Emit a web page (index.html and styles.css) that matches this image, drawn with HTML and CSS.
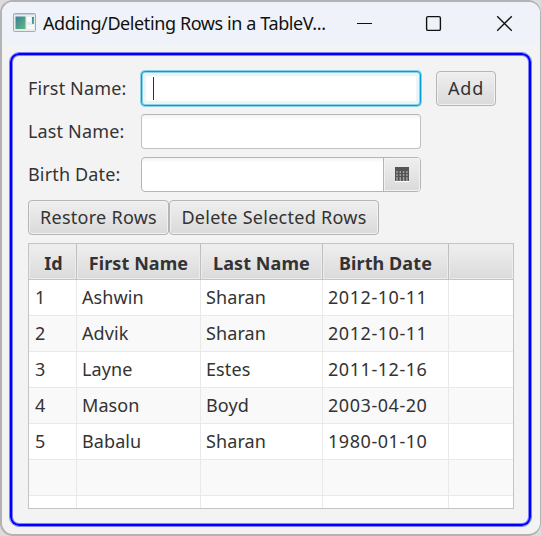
FILE: index.html
```html
<!DOCTYPE html>
<html lang="en">
<head>
<meta charset="utf-8">
<title>Adding/Deleting Rows in a TableView</title>
<link rel="stylesheet" href="styles.css">
</head>
<body>
<div class="window">
  <header class="titlebar">
    <svg class="app-icon" width="23" height="19" viewBox="0 0 23 19">
      <defs><linearGradient id="g" x1="0" y1="0" x2="1" y2="1"><stop offset="0" stop-color="#397fa0"/><stop offset="1" stop-color="#64b878"/></linearGradient></defs>
      <rect x=".5" y=".5" width="22" height="18" rx="1" fill="#e9ecee" stroke="#a5aab4"/>
      <path d="M1 1.5h21" stroke="#c9cdd5"/>
      <rect x="2.5" y="3.5" width="10" height="12.5" fill="url(#g)"/>
      <rect x="14" y="4" width="4" height="5" fill="#fafafa"/>
      <rect x="14" y="12" width="7" height="4" fill="#f8f8f8"/>
      <rect x="19" y="4" width="2" height="7" fill="url(#g)"/>
    </svg>
    <h1 class="title">Adding/Deleting Rows in a TableV...</h1>
    <svg class="controls" width="160" height="20" viewBox="0 0 160 20" fill="none" stroke="#111">
      <path d="M1 10.5h15"/>
      <rect x="70.6" y="3.6" width="13.8" height="13.8" rx="1.5" stroke-width="1.4"/>
      <path d="M141.2 3.2l14.6 14.6M155.8 3.2l-14.6 14.6" stroke-width="1.3"/>
    </svg>
  </header>
  <main class="panel">
    <form class="form">
      <label>First Name:</label><div class="field focused"><i class="caret"></i></div><button type="button" class="button add">Add</button>
      <label>Last Name:</label><div class="field"></div><span></span>
      <label>Birth Date:</label>
      <div class="field date"><span class="picker">
        <svg width="14" height="15" viewBox="0 0 14 15">
          <path d="M0 0h14v14H0z" fill="#555"/>
          <path d="M0 14h14v1H0z" fill="#fff"/>
          <path d="M1.3 5h11.8M1.3 8h11.8M1.3 11h11.8M1.3 13h11.8" stroke="#eee" stroke-width="1.2" stroke-dasharray="1.4 1.9"/>
        </svg>
      </span></div>
    </form>
    <div class="actions"><button type="button" class="button restore">Restore Rows</button><button type="button" class="button delete">Delete Selected Rows</button></div>
    <div class="table">
      <div class="row head"><b>Id</b><b>First Name</b><b>Last Name</b><b>Birth Date</b><b></b></div>
      <div class="row"><span>1</span><span>Ashwin</span><span>Sharan</span><span>2012-10-11</span><span></span></div>
      <div class="row"><span>2</span><span>Advik</span><span>Sharan</span><span>2012-10-11</span><span></span></div>
      <div class="row"><span>3</span><span>Layne</span><span>Estes</span><span>2011-12-16</span><span></span></div>
      <div class="row"><span>4</span><span>Mason</span><span>Boyd</span><span>2003-04-20</span><span></span></div>
      <div class="row"><span>5</span><span>Babalu</span><span>Sharan</span><span>1980-01-10</span><span></span></div>
      <div class="row"><span></span><span></span><span></span><span></span><span></span></div>
      <div class="row"><span></span><span></span><span></span><span></span><span></span></div>
    </div>
  </main>
</div>
</body>
</html>
```
FILE: styles.css
```css
* { box-sizing: border-box; }
body {
  margin: 0;
  background: #dcdcdc;
  font: 18px/24px "Noto Sans", sans-serif;
  color: #333;
  overflow: hidden;
}
.window {
  width: 541px;
  height: 536px;
  border: 2px solid #b3b3b3;
  border-right-width: 1px;
  border-radius: 13px;
  background: #f3f3f3;
  overflow: hidden;
}
.titlebar {
  height: 43px;
  display: flex;
  align-items: center;
  padding-left: 11px;
  background: #eff3f9;
  color: #111;
}
.app-icon { margin-top: -3px; }
.title {
  margin: -1px 0 0 7px;
  width: 313px;
  font-size: 18px;
  font-weight: 400;
  letter-spacing: -0.4px;
  white-space: nowrap;
}
.controls { margin-top: -1px; }
.panel {
  width: 523px;
  height: 475px;
  margin: 7px 0 0 7px;
  padding: 18px 0 0 18px;
  border: 1px solid #8080f9;
  border-radius: 10px;
  box-shadow: inset 0 0 0 2px #00f, inset 0 0 0 3px #8080f9;
}
.form {
  display: grid;
  grid-template-columns: 113px 280px 60px;
  grid-template-rows: repeat(3, 35px);
  row-gap: 8px;
}
.form label { line-height: 34px; letter-spacing: 0.15px; white-space: nowrap; }
.field {
  border: 1px solid #c0c0c0;
  border-top-color: #b5b5b5;
  border-radius: 4px;
  background: linear-gradient(#f3f3f3, #fff 5px);
}
.focused {
  border-color: #039ed3;
  background: #fff;
  box-shadow: 0 0 0 1px #8bd2e8, inset 0 0 0 1px #8bd2e8, inset 0 0 0 4px #e8f6fa;
  padding: 5px 0 0 11px;
}
.caret { display: block; width: 1px; height: 23px; background: #333; }
.date { display: flex; justify-content: flex-end; border-color: #b5b5b5; }
.picker {
  width: 37px;
  display: flex;
  align-items: center;
  justify-content: center;
  border-left: 1px solid #b5b5b5;
  border-radius: 0 3px 3px 0;
  background: linear-gradient(#efefef, #dadada);
  box-shadow: inset 0 0 0 1px #f2f2f2;
}
.button {
  height: 35px;
  padding: 0 0 1px;
  border: 1px solid #b5b5b5;
  border-radius: 4px;
  background: linear-gradient(#efefef, #dadada);
  box-shadow: inset 0 0 0 1px #f1f1f1;
  color: #333;
  font: inherit;
  letter-spacing: 0.27px;
  white-space: nowrap;
}
.add { width: 60px; margin-left: 15px; letter-spacing: 0.8px; }
.actions { display: flex; margin-top: 8px; }
.restore { width: 141px; }
.delete { width: 210px; }
.table {
  width: 486px;
  height: 266px;
  margin-top: 8px;
  border: 1px solid #c4c4c4;
  background: #fff;
  overflow: hidden;
}
.row {
  display: grid;
  grid-template-columns: 48px 124px 122px 126px 1fr;
  height: 36px;
}
.row:nth-child(odd) { background: #f9f9f9; }
.row span {
  padding-left: 5px;
  line-height: 34px;
  border-right: 1px solid #e9e9e9;
  border-bottom: 1px solid #e9e9e9;
  letter-spacing: 0.1px;
}
.row span:nth-child(4) { letter-spacing: 0.55px; }
.row span:first-child { padding-left: 6px; }
.row span:last-child { border-right: 0; }
.table .head { height: 36px; grid-template-rows: 37px; margin-bottom: 0; background: linear-gradient(#efefef, #dadada); }
.head b {
  height: 36px;
  text-align: center;
  line-height: 38px;
  border-right: 1px solid #bfbfbf;
  border-bottom: 1px solid #c4c4c4;
  box-shadow: inset 0 0 0 1px #ececec;
  letter-spacing: 0.08px;
}
.head b:first-child { padding-left: 2px; }
.head b:last-child { border-right: 0; }
```
